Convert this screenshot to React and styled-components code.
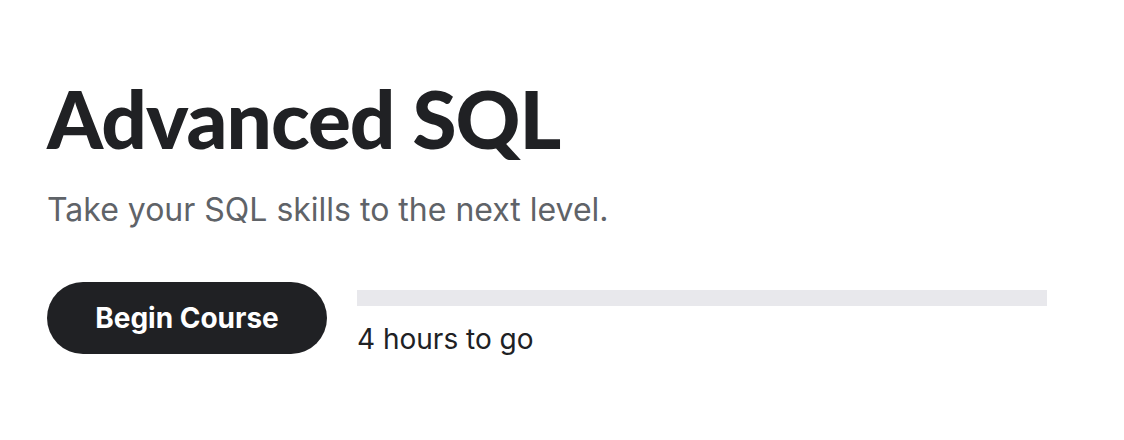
import styled, { createGlobalStyle } from 'styled-components';

const GlobalStyle = createGlobalStyle`
  body {
    margin: 0;
    background: #ffffff;
    font-family: Inter, "Liberation Sans", sans-serif;
  }
`;

const Page = styled.div`
  padding: 70px 48px 0 47px;
`;

const Title = styled.h1`
  margin: 0;
  font-family: Lato, "Noto Sans", sans-serif;
  font-weight: 900;
  font-size: 80px;
  line-height: 96px;
  letter-spacing: -1px;
  color: #202124;
`;

const Subtitle = styled.p`
  margin: 24px 0 0;
  font-size: 32px;
  line-height: 40px;
  color: #5f6368;
`;

const Actions = styled.div`
  display: flex;
  align-items: flex-start;
  gap: 30px;
  margin-top: 52px;
`;

const Button = styled.button`
  width: 280px;
  height: 72px;
  border: none;
  border-radius: 36px;
  background: #202124;
  color: #ffffff;
  font-family: Inter, "Liberation Sans", sans-serif;
  font-weight: 700;
  font-size: 28px;
  cursor: pointer;
`;

const Progress = styled.div`
  display: flex;
  flex-direction: column;
  gap: 16px;
  padding-top: 8px;
`;

const Track = styled.div`
  width: 690px;
  height: 16px;
  background: #e8e8ec;
`;

const Remaining = styled.span`
  font-size: 28px;
  line-height: 34px;
  color: #202124;
`;

export default function App() {
  return (
    <>
      <GlobalStyle />
      <Page>
        <Title>Advanced SQL</Title>
        <Subtitle>Take your SQL skills to the next level.</Subtitle>
        <Actions>
          <Button>Begin Course</Button>
          <Progress>
            <Track />
            <Remaining>4 hours to go</Remaining>
          </Progress>
        </Actions>
      </Page>
    </>
  );
}
